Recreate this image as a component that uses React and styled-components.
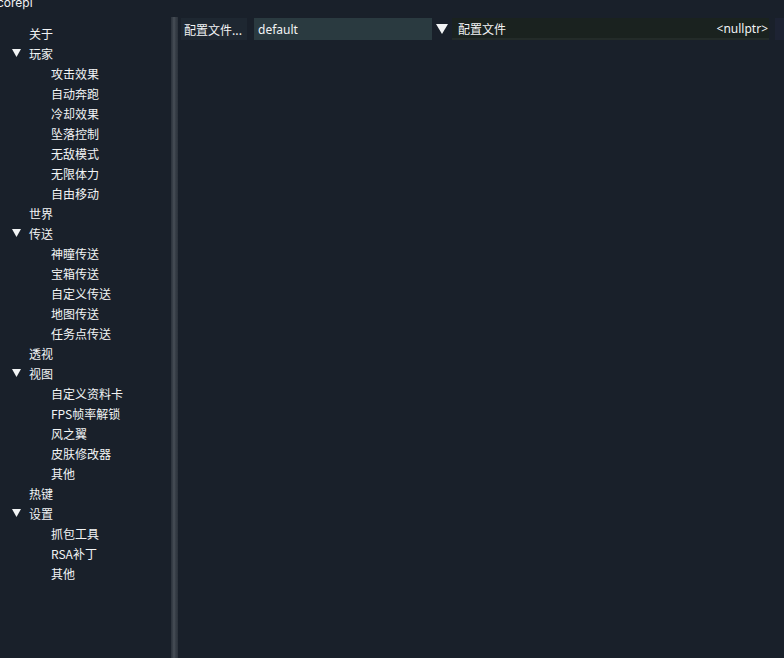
import React from "react";
import styled, { createGlobalStyle } from "styled-components";

const Global = createGlobalStyle`
  html, body { margin: 0; padding: 0; background: #19202a; overflow: hidden; }
  body { font-family: "Noto Sans CJK SC", "Noto Sans", sans-serif; color: #f2f4f5; }
`;

const Window = styled.div`
  width: 784px;
  height: 658px;
  display: flex;
  flex-direction: column;
  background: #19202a;
  overflow: hidden;
`;

const TitleStrip = styled.div`
  height: 10px;
  overflow: hidden;
  display: flex;
  align-items: flex-end;
  font-family: "Inter", "Noto Sans", sans-serif;
  font-size: 12px;
  line-height: 14px;
  color: #f0f2f4;
  span { margin-left: -3px; }
`;

const Body = styled.div`
  flex: 1;
  display: flex;
  min-height: 0;
`;

const Sidebar = styled.div`
  width: 171px;
  flex-shrink: 0;
  padding-top: 13px;
  display: flex;
  flex-direction: column;
`;

const Row = styled.div`
  height: 20px;
  display: flex;
  align-items: center;
  padding-left: ${(p) => (p.$level === 1 ? 51 : 12)}px;
  font-size: 12px;
  color: #f2f4f5;
  white-space: nowrap;
`;

const Arrow = styled.span`
  width: 17px;
  display: inline-flex;
  align-items: center;
  svg { display: block; }
`;

const Splitter = styled.div`
  width: 7px;
  flex-shrink: 0;
  margin-top: 7px;
  background: linear-gradient(90deg, #2b323b 0, #3b424b 2px, #4a5159 3px, #3b424b 4px, #2b323b 7px);
`;

const Main = styled.div`
  flex: 1;
  min-width: 0;
  overflow: hidden;
  padding-top: 8px;
  padding-left: 3px;
  display: flex;
  flex-direction: column;
`;

const Toolbar = styled.div`
  height: 22px;
  display: flex;
  align-items: stretch;
  font-size: 12px;
  & > * { flex-shrink: 0; }
`;

const Button = styled.div`
  width: 66px;
  background: #1e2731;
  display: flex;
  align-items: center;
  padding-left: 3px;
  white-space: nowrap;
  box-sizing: border-box;
`;

const Input = styled.div`
  width: 178px;
  margin-left: 7px;
  background: #2a3a40;
  display: flex;
  align-items: center;
  padding-left: 4px;
  box-sizing: border-box;
  font-family: "Noto Sans", sans-serif;
  font-size: 12px;
`;

const Combo = styled.div`
  width: 20px;
  display: flex;
  align-items: center;
  justify-content: center;
`;

const Field = styled.div`
  width: 317px;
  background: #1a221f;
  border-bottom: 2px solid #232b29;
  display: flex;
  align-items: center;
  justify-content: space-between;
  padding: 0 1px 0 6px;
  box-sizing: border-box;
`;

const Value = styled.span`
  font-family: "Noto Sans", sans-serif;
  font-size: 12px;
`;

const Edge = styled.div`
  width: 10px;
  margin-left: 6px;
  background: #1d2333;
`;

const Tri = () => (
  <svg width="9" height="8" viewBox="0 0 9 8">
    <polygon points="0,0 9,0 4.5,8" fill="#f2f4f5" />
  </svg>
);

const BigTri = () => (
  <svg width="12" height="10" viewBox="0 0 12 10">
    <polygon points="0,0 12,0 6,10" fill="#f2f4f5" />
  </svg>
);

const tree = [
  ["关于", 0],
  ["玩家", 0, true],
  ["攻击效果", 1],
  ["自动奔跑", 1],
  ["冷却效果", 1],
  ["坠落控制", 1],
  ["无敌模式", 1],
  ["无限体力", 1],
  ["自由移动", 1],
  ["世界", 0],
  ["传送", 0, true],
  ["神瞳传送", 1],
  ["宝箱传送", 1],
  ["自定义传送", 1],
  ["地图传送", 1],
  ["任务点传送", 1],
  ["透视", 0],
  ["视图", 0, true],
  ["自定义资料卡", 1],
  ["FPS帧率解锁", 1],
  ["风之翼", 1],
  ["皮肤修改器", 1],
  ["其他", 1],
  ["热键", 0],
  ["设置", 0, true],
  ["抓包工具", 1],
  ["RSA补丁", 1],
  ["其他", 1],
];

export default function App() {
  return (
    <Window>
      <Global />
      <TitleStrip><span>corepl</span></TitleStrip>
      <Body>
        <Sidebar>
          {tree.map(([label, level, open], i) => (
            <Row key={i} $level={level}>
              {level === 0 && <Arrow>{open ? <Tri /> : null}</Arrow>}
              {label}
            </Row>
          ))}
        </Sidebar>
        <Splitter />
        <Main>
          <Toolbar>
            <Button>配置文件...</Button>
            <Input>default</Input>
            <Combo><BigTri /></Combo>
            <Field>
              <span>配置文件</span>
              <Value>&lt;nullptr&gt;</Value>
            </Field>
            <Edge />
          </Toolbar>
        </Main>
      </Body>
    </Window>
  );
}
